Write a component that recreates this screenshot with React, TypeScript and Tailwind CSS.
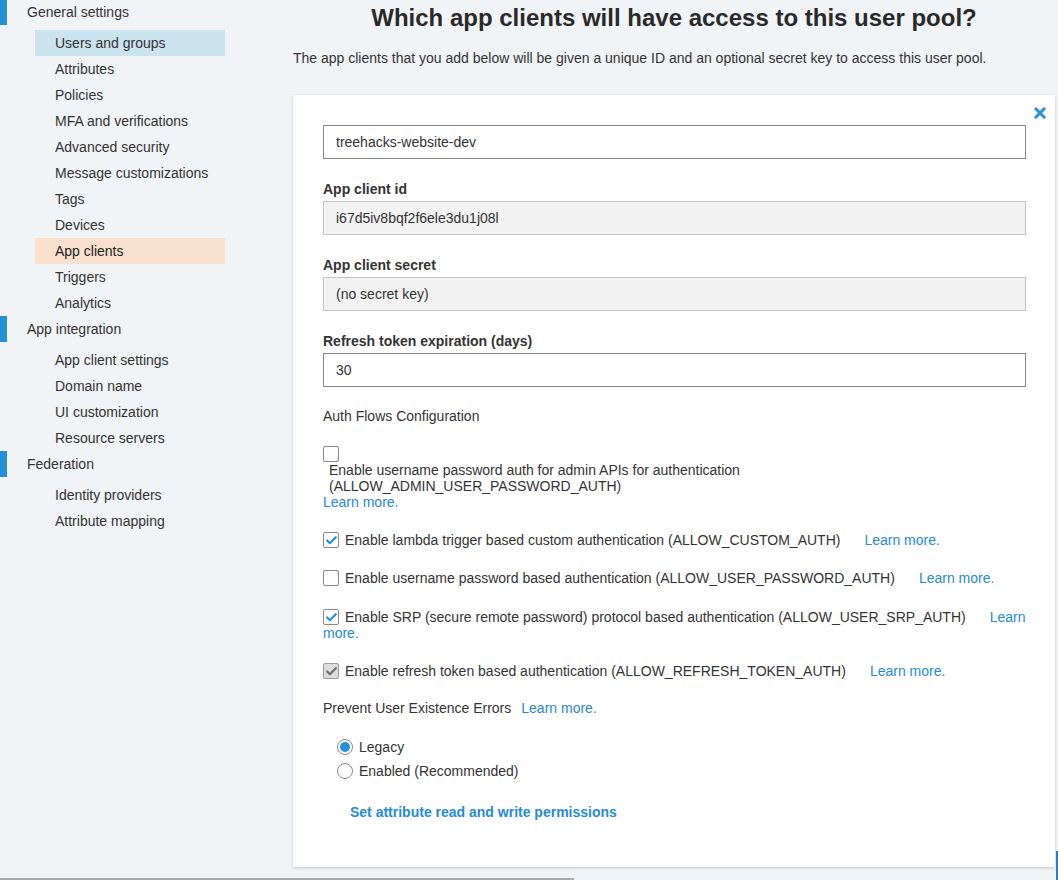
import { Check } from 'lucide-react';

type NavItem = { label: string; active?: 'blue' | 'orange' };
type NavSection = { title: string; items: NavItem[] };

const NAV: NavSection[] = [
  {
    title: 'General settings',
    items: [
      { label: 'Users and groups', active: 'blue' },
      { label: 'Attributes' },
      { label: 'Policies' },
      { label: 'MFA and verifications' },
      { label: 'Advanced security' },
      { label: 'Message customizations' },
      { label: 'Tags' },
      { label: 'Devices' },
      { label: 'App clients', active: 'orange' },
      { label: 'Triggers' },
      { label: 'Analytics' },
    ],
  },
  {
    title: 'App integration',
    items: [
      { label: 'App client settings' },
      { label: 'Domain name' },
      { label: 'UI customization' },
      { label: 'Resource servers' },
    ],
  },
  {
    title: 'Federation',
    items: [{ label: 'Identity providers' }, { label: 'Attribute mapping' }],
  },
];

function Sidebar() {
  return (
    <aside className="w-[283px] shrink-0 -mt-px text-[14px] text-[#333]">
      {NAV.map((section) => (
        <div key={section.title}>
          <div className="flex h-[26px] items-center">
            <span className="h-full w-[7px] bg-[#2590d6]" />
            <span className="pl-5">{section.title}</span>
          </div>
          <div className="mt-[5px]">
            {section.items.map((item) => (
              <div
                key={item.label}
                className={`ml-[35px] flex h-[26px] w-[190px] items-center pl-5 ${
                  item.active === 'blue'
                    ? 'bg-[#cbe2ef]'
                    : item.active === 'orange'
                      ? 'bg-[#f8e0cc] text-[#222]'
                      : ''
                }`}
              >
                {item.label}
              </div>
            ))}
          </div>
        </div>
      ))}
    </aside>
  );
}

function Box({ checked, disabled }: { checked?: boolean; disabled?: boolean }) {
  return (
    <span
      className={`flex h-4 w-4 shrink-0 items-center justify-center rounded-[2px] border ${
        disabled ? 'border-[#9a9a9a] bg-[#dcdcdc]' : 'border-[#8a8a8a] bg-white'
      }`}
    >
      {checked && (
        <Check
          className={`h-[13px] w-[13px] ${disabled ? 'text-[#6f6f6f]' : 'text-[#2590d6]'}`}
          strokeWidth={4}
        />
      )}
    </span>
  );
}

function Radio({ checked }: { checked?: boolean }) {
  return (
    <span className="flex h-4 w-4 items-center justify-center rounded-full border border-[#8a8a8a] bg-white">
      {checked && <span className="h-[10px] w-[10px] rounded-full bg-[#2590d6]" />}
    </span>
  );
}

const link = 'text-[#258bd4]';

function Card() {
  return (
    <div className="relative mt-[27px] h-[772px] bg-white pl-[30px] pr-[29px] pt-[30px] text-[14px] text-[#333] shadow-[0_1px_3px_rgba(0,0,0,0.18)]">
      <svg
        className="absolute right-[9px] top-[12px]"
        width="12"
        height="12"
        viewBox="0 0 12 12"
      >
        <path d="M2 2 L10 10 M10 2 L2 10" stroke="#2590d6" strokeWidth="3" strokeLinecap="square" />
      </svg>

      <div className="flex h-[34px] items-center border border-[#888] px-3">
        treehacks-website-dev
      </div>

      <div className="mt-5 h-5 font-bold leading-5">App client id</div>
      <div className="mt-[2px] flex h-[34px] items-center border border-[#c4c4c4] bg-[#f2f2f2] px-3">
        i67d5iv8bqf2f6ele3du1j08l
      </div>

      <div className="mt-5 h-5 font-bold leading-5">App client secret</div>
      <div className="mt-[2px] flex h-[34px] items-center border border-[#c4c4c4] bg-[#f2f2f2] px-3">
        (no secret key)
      </div>

      <div className="mt-5 h-5 font-bold leading-5">Refresh token expiration (days)</div>
      <div className="mt-[2px] flex h-[34px] items-center border border-[#888] px-3">30</div>

      <div className="mt-[19px] h-5 leading-5">Auth Flows Configuration</div>

      <div className="mt-5 leading-4">
        <Box />
        <div className="pl-[6px]">
          Enable username password auth for admin APIs for authentication
          <br />
          (ALLOW_ADMIN_USER_PASSWORD_AUTH)
        </div>
        <div className={link}>Learn more.</div>
      </div>

      <div className="mt-[22px] flex items-center gap-[6px] whitespace-nowrap leading-4">
        <Box checked />
        <span>Enable lambda trigger based custom authentication (ALLOW_CUSTOM_AUTH)</span>
        <span className={`ml-[18px] ${link}`}>Learn more.</span>
      </div>

      <div className="mt-[22px] flex items-center gap-[6px] whitespace-nowrap leading-4">
        <Box />
        <span>Enable username password based authentication (ALLOW_USER_PASSWORD_AUTH)</span>
        <span className={`ml-[18px] ${link}`}>Learn more.</span>
      </div>

      <div className="mt-[23px] leading-4">
        <div className="flex items-center gap-[6px] whitespace-nowrap">
          <Box checked />
          <span>Enable SRP (secure remote password) protocol based authentication (ALLOW_USER_SRP_AUTH)</span>
          <span className={`ml-[18px] ${link}`}>Learn</span>
        </div>
        <div className={link}>more.</div>
      </div>

      <div className="mt-[22px] flex items-center gap-[6px] whitespace-nowrap leading-4">
        <Box checked disabled />
        <span>Enable refresh token based authentication (ALLOW_REFRESH_TOKEN_AUTH)</span>
        <span className={`ml-[18px] ${link}`}>Learn more.</span>
      </div>

      <div className="mt-[21px] flex leading-4">
        <span>Prevent User Existence Errors</span>
        <span className={`ml-[10px] ${link}`}>Learn more.</span>
      </div>

      <div className="mt-[23px] flex flex-col gap-2 pl-[14px] leading-4">
        <div className="flex items-center gap-[6px]">
          <Radio checked />
          <span>Legacy</span>
        </div>
        <div className="flex items-center gap-[6px]">
          <Radio />
          <span>Enabled (Recommended)</span>
        </div>
      </div>

      <div className={`mt-[25px] pl-[27px] font-bold leading-4 ${link}`}>
        Set attribute read and write permissions
      </div>
    </div>
  );
}

export default function App() {
  return (
    <div
      className="relative flex h-[880px] overflow-hidden bg-[#f1f4f6]"
      style={{ fontFamily: '"Liberation Sans", Arial, sans-serif' }}
    >
      <Sidebar />
      <main className="ml-[10px] w-[762px] shrink-0">
        <h1 className="flex h-[36px] items-center justify-center text-[24px] font-bold text-[#2a2a2a]">
          Which app clients will have access to this user pool?
        </h1>
        <p className="mt-3 h-5 text-[14px] leading-5 text-[#333]">
          The app clients that you add below will be given a unique ID and an optional secret key to access this user pool.
        </p>
        <Card />
      </main>
      <div className="absolute bottom-0 right-0 h-[29px] w-[2px] bg-[#2a7fc0]" />
      <div className="absolute bottom-0 left-0 h-[2px] w-[574px] bg-[#a9abad]" />
    </div>
  );
}
